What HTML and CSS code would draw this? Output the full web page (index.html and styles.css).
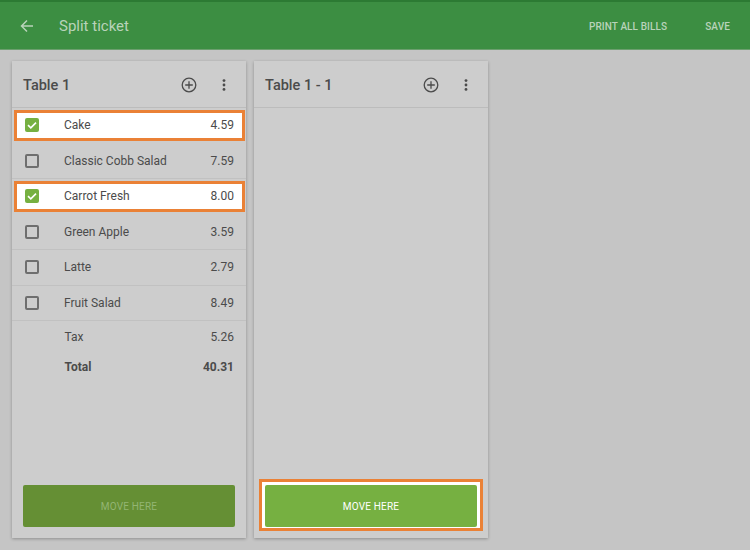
FILE: index.html
```html
<!DOCTYPE html>
<html lang="en">
<head>
<meta charset="utf-8">
<title>Split ticket</title>
<link rel="stylesheet" href="styles.css">
</head>
<body>
<header class="appbar">
  <svg class="back" width="14" height="14" viewBox="0 0 14 14"><path d="M13 7H2M7 1.5 1.5 7 7 12.5" fill="none" stroke="currentColor" stroke-width="1.5"/></svg>
  <h1 class="title">Split ticket</h1>
  <span class="action print">PRINT ALL BILLS</span>
  <span class="action">SAVE</span>
</header>
<main class="board">
  <section class="card">
    <div class="card-head">
      <h2 class="card-title">Table 1</h2>
      <svg class="add" width="16" height="16" viewBox="0 0 16 16"><circle cx="8" cy="8" r="6.8" fill="none" stroke="currentColor" stroke-width="1.3"/><path d="M8 4.2v7.6M4.2 8h7.6" stroke="currentColor" stroke-width="1.3"/></svg>
      <svg class="more" width="4" height="12" viewBox="0 0 4 12"><circle cx="2" cy="1.6" r="1.4"/><circle cx="2" cy="6" r="1.4"/><circle cx="2" cy="10.4" r="1.4"/></svg>
    </div>
    <div class="rows">
      <div class="row sel"><span class="box on"><svg width="14" height="14" viewBox="0 0 14 14"><path d="M3 7.2l2.8 2.6L11 4.6" fill="none" stroke="#fff" stroke-width="1.6"/></svg></span><span class="name">Cake</span><span class="price">4.59</span></div>
      <div class="row"><span class="box"></span><span class="name">Classic Cobb Salad</span><span class="price">7.59</span></div>
      <div class="row sel"><span class="box on"><svg width="14" height="14" viewBox="0 0 14 14"><path d="M3 7.2l2.8 2.6L11 4.6" fill="none" stroke="#fff" stroke-width="1.6"/></svg></span><span class="name">Carrot Fresh</span><span class="price">8.00</span></div>
      <div class="row"><span class="box"></span><span class="name">Green Apple</span><span class="price">3.59</span></div>
      <div class="row"><span class="box"></span><span class="name">Latte</span><span class="price">2.79</span></div>
      <div class="row"><span class="box"></span><span class="name">Fruit Salad</span><span class="price">8.49</span></div>
    </div>
    <div class="totals">
      <div class="sum"><span class="name">Tax</span><span class="price">5.26</span></div>
      <div class="sum total"><span class="name">Total</span><span class="price">40.31</span></div>
    </div>
    <div class="foot"><button class="move dim">MOVE HERE</button></div>
  </section>
  <section class="card">
    <div class="card-head">
      <h2 class="card-title">Table 1 - 1</h2>
      <svg class="add" width="16" height="16" viewBox="0 0 16 16"><circle cx="8" cy="8" r="6.8" fill="none" stroke="currentColor" stroke-width="1.3"/><path d="M8 4.2v7.6M4.2 8h7.6" stroke="currentColor" stroke-width="1.3"/></svg>
      <svg class="more" width="4" height="12" viewBox="0 0 4 12"><circle cx="2" cy="1.6" r="1.4"/><circle cx="2" cy="6" r="1.4"/><circle cx="2" cy="10.4" r="1.4"/></svg>
    </div>
    <div class="foot"><span class="frame"><button class="move">MOVE HERE</button></span></div>
  </section>
</main>
</body>
</html>
```
FILE: styles.css
```css
* { box-sizing: border-box; }
html, body { margin: 0; height: 100%; }
body {
  width: 750px;
  height: 550px;
  overflow: hidden;
  display: flex;
  flex-direction: column;
  background: #c5c5c5;
  font-family: Roboto, "Liberation Sans", sans-serif;
  color: #4b4b4b;
}
.appbar {
  flex: none;
  height: 50px;
  display: flex;
  align-items: center;
  padding: 1px 20px 0;
  background: #3c8e42;
  border-top: 2px solid #2c7a33;
  border-bottom: 1px solid #6c9f6e;
  color: #b9d3ba;
}
.back { margin-right: 25px; }
.title { margin: 0; flex: 1; font-size: 15px; font-weight: 400; }
.action { font-size: 10px; font-weight: 500; letter-spacing: 0.1px; }
.print { margin-right: 38px; }
.board { flex: 1; display: flex; gap: 8px; padding: 11px 12px 12px; }
.card {
  width: 234px;
  display: flex;
  flex-direction: column;
  background: #cdcdcd;
  box-shadow: 0 1px 3px rgba(0, 0, 0, 0.28);
}
.card-head {
  flex: none;
  height: 47px;
  display: flex;
  align-items: center;
  padding: 2px 20px 0 11px;
  border-bottom: 1px solid #bcbcbc;
}
.card-title { margin: 0; flex: 1; font-size: 14.5px; font-weight: 500; }
.add { margin-right: 25.5px; color: #4b4b4b; }
.more { fill: #4b4b4b; }
.rows { flex: none; }
.row {
  height: 35.5px;
  display: flex;
  align-items: center;
  padding: 0 12px 0 13px;
  font-size: 12px;
  border-bottom: 1px solid #c1c1c1;
}
.row.sel {
  margin: 1.5px 1px 3px 2px;
  height: 31px;
  padding: 0 8px;
  background: #fff;
  border: 3px solid #ea8136;
}
.box {
  flex: none;
  width: 14px;
  height: 14px;
  margin-right: 25px;
  border: 2px solid #6e6e6e;
  border-radius: 2px;
}
.box.on { background: #76b041; border: 0; display: flex; }
.name { flex: 1; }
.totals { padding: 1px 12px 0 52.5px; font-size: 12px; }
.sum { height: 30px; display: flex; align-items: center; }
.total { font-weight: 700; }
.foot { margin-top: auto; padding: 0 11px 11px; }
.move {
  display: block;
  width: 100%;
  height: 42px;
  border: 0;
  border-radius: 2px;
  background: #76b041;
  color: #fff;
  font: 400 10px Roboto, "Liberation Sans", sans-serif;
  letter-spacing: 0.2px;
}
.move.dim { background: #658f34; color: #93b573; }
.frame {
  display: block;
  margin: 0 -6px -4px;
  padding: 3px 3px 1px;
  background: #fff;
  border: 3px solid #ea8136;
}
```
